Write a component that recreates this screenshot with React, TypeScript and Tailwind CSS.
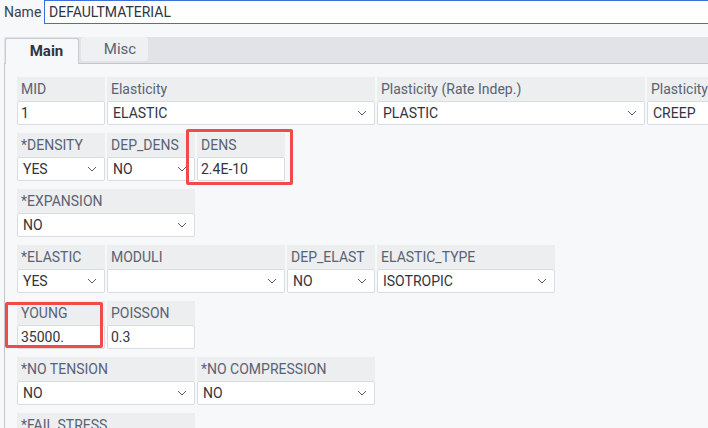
import React from "react";

type Cell = {
  label: string;
  span: 1 | 2 | 3;
  kind: "text" | "select";
  value: string;
  mark?: "dens" | "young";
};

const widths: Record<number, string> = { 1: "w-[88px]", 2: "w-[178px]", 3: "w-[268px]" };

const rows: Cell[][] = [
  [
    { label: "MID", span: 1, kind: "text", value: "1" },
    { label: "Elasticity", span: 3, kind: "select", value: "ELASTIC" },
    { label: "Plasticity (Rate Indep.)", span: 3, kind: "select", value: "PLASTIC" },
    { label: "Plasticity (Rate Dep.)", span: 3, kind: "select", value: "CREEP" },
  ],
  [
    { label: "*DENSITY", span: 1, kind: "select", value: "YES" },
    { label: "DEP_DENS", span: 1, kind: "select", value: "NO" },
    { label: "DENS", span: 1, kind: "text", value: "2.4E-10", mark: "dens" },
  ],
  [{ label: "*EXPANSION", span: 2, kind: "select", value: "NO" }],
  [
    { label: "*ELASTIC", span: 1, kind: "select", value: "YES" },
    { label: "MODULI", span: 2, kind: "select", value: "" },
    { label: "DEP_ELAST", span: 1, kind: "select", value: "NO" },
    { label: "ELASTIC_TYPE", span: 2, kind: "select", value: "ISOTROPIC" },
  ],
  [
    { label: "YOUNG", span: 1, kind: "text", value: "35000.", mark: "young" },
    { label: "POISSON", span: 1, kind: "text", value: "0.3" },
  ],
  [
    { label: "*NO TENSION", span: 2, kind: "select", value: "NO" },
    { label: "*NO COMPRESSION", span: 2, kind: "select", value: "NO" },
  ],
  [{ label: "*FAIL STRESS", span: 2, kind: "select", value: "NO" }],
];

function Chevron() {
  return (
    <svg width="10" height="6" viewBox="0 0 10 6" className="shrink-0">
      <path d="M1 1 L5 5 L9 1" fill="none" stroke="#555c69" strokeWidth="1" />
    </svg>
  );
}

function Field({ c }: { c: Cell }) {
  return (
    <div className={`relative flex flex-col shrink-0 ${widths[c.span]}`}>
      <div className="h-[24px] bg-[#eceef0] pl-[4px] flex items-center text-[14px] text-[#5a6272] whitespace-nowrap overflow-hidden">
        {c.label}
      </div>
      {c.kind === "text" ? (
        <div className="h-[24px] bg-white border border-[#d9dce1] rounded-[2px] pl-[3px] flex items-center text-[14px] text-[#2f3540]">
          {c.value}
        </div>
      ) : (
        <div className="h-[24px] bg-white border border-[#d9dce1] rounded-[2px] pl-[5px] pr-[7px] flex items-center justify-between text-[14px] text-[#2f3540]">
          <span className="whitespace-nowrap">{c.value}</span>
          <Chevron />
        </div>
      )}
      {c.mark === "dens" && (
        <div className="absolute left-[-11px] right-[-8px] top-[-4px] bottom-[-4px] border-[3px] border-[#f04b4b] rounded-[2px] pointer-events-none" />
      )}
      {c.mark === "young" && (
        <div className="absolute left-[-12px] right-[2px] top-[1px] bottom-[1px] border-[3px] border-[#f04b4b] rounded-[2px] pointer-events-none" />
      )}
    </div>
  );
}

export default function App() {
  return (
    <div
      className="w-[708px] h-[428px] overflow-hidden bg-[#f7f8fa] flex flex-col"
      style={{ fontFamily: "Roboto, 'Noto Sans', sans-serif" }}
    >
      <div className="flex items-center h-[24px] shrink-0">
        <span className="pl-[4px] w-[44px] text-[14px] text-[#3a404b]">Name</span>
        <div className="flex-1 h-[24px] mr-[-4px] border border-[#3b6fdc] bg-white flex items-center pl-[4px] text-[14px] text-[#2f3540]">
          DEFAULTMATERIAL
        </div>
      </div>
      <div className="mt-[13px] ml-[4px] h-[27px] shrink-0 bg-[#e1e3e7] border-b border-[#c3c7cd] flex items-end gap-[2px] pl-[1px]">
        <div className="w-[74px] h-[26px] mb-[-1px] pl-[9px] bg-[#f7f8fa] border border-b-0 border-[#c8ccd2] rounded-t-[3px] flex items-center justify-center text-[15px] font-bold text-[#2f3540]">
          Main
        </div>
        <div className="w-[67px] h-[24px] mb-[2px] pl-[11px] bg-[#eef0f2] rounded-[3px] flex items-center justify-center text-[15px] text-[#5a6272]">
          Misc
        </div>
      </div>
      <div className="ml-[4px] flex-1 border-l border-[#c3c7cd] pl-[12px] pt-[13px] flex flex-col gap-[8px]">
        {rows.map((r, i) => (
          <div key={i} className="flex gap-[2px]">
            {r.map((c, j) => (
              <Field key={j} c={c} />
            ))}
          </div>
        ))}
      </div>
    </div>
  );
}
